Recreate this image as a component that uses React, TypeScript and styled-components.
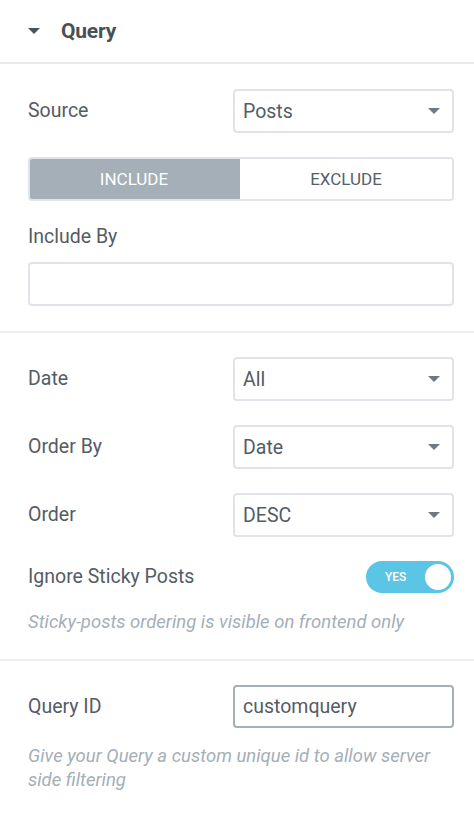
import { createGlobalStyle } from "styled-components";
import styled from "styled-components";

const GlobalStyle = createGlobalStyle`
  html, body {
    margin: 0;
    padding: 0;
    background: #ffffff;
  }
  body {
    font-family: Roboto, "Liberation Sans", Arial, sans-serif;
    color: #556068;
  }
`;

const Caret = ({ size = 12 }: { size?: number }) => (
  <svg width={size} height={size / 2} viewBox="0 0 12 6">
    <path d="M0 0 L12 0 L6 6 Z" fill="currentColor" />
  </svg>
);

const SelectField: React.FC<{ value: string }> = ({ value }) => (
  <Select>
    <span>{value}</span>
    <SelectCaret>
      <Caret size={12} />
    </SelectCaret>
  </Select>
);

export default function App() {
  return (
    <Panel>
      <GlobalStyle />
      <Header>
        <HeaderCaret>
          <Caret size={12} />
        </HeaderCaret>
        <Title>Query</Title>
      </Header>

      <Section $first>
        <Row>
          <Label>Source</Label>
          <SelectField value="Posts" />
        </Row>
        <Tabs>
          <Tab $active>INCLUDE</Tab>
          <Tab>EXCLUDE</Tab>
        </Tabs>
        <Field>
          <Label>Include By</Label>
          <TextBox />
        </Field>
      </Section>

      <Section>
        <Row>
          <Label>Date</Label>
          <SelectField value="All" />
        </Row>
        <Row>
          <Label>Order By</Label>
          <SelectField value="Date" />
        </Row>
        <Row>
          <Label>Order</Label>
          <SelectField value="DESC" />
        </Row>
        <Field $gap={17}>
          <SwitchRow>
            <Label>Ignore Sticky Posts</Label>
            <Switch>
              <SwitchText>YES</SwitchText>
              <Knob />
            </Switch>
          </SwitchRow>
          <Hint>Sticky-posts ordering is visible on frontend only</Hint>
        </Field>
      </Section>

      <Section $last>
        <Field $gap={16}>
          <Row>
            <Label>Query ID</Label>
            <TextBox $focused $half>
              customquery
            </TextBox>
          </Row>
          <Hint>Give your Query a custom unique id to allow server side filtering</Hint>
        </Field>
      </Section>
    </Panel>
  );
}

const Panel = styled.div`
  width: 474px;
  min-height: 818px;
  background: #fff;
`;

const Header = styled.div`
  height: 62px;
  display: flex;
  align-items: center;
  padding: 0 20px 0 28px;
  border-bottom: 2px solid #e8eaed;
`;

const HeaderCaret = styled.span`
  display: flex;
  color: #4b5259;
  margin-right: 21px;
  margin-top: -1px;
`;

const Title = styled.h3`
  margin: 0;
  font-size: 21px;
  font-weight: 700;
  color: #495157;
  letter-spacing: -0.2px;
`;

const Section = styled.div<{ $first?: boolean; $last?: boolean }>`
  display: flex;
  flex-direction: column;
  gap: 24px;
  padding: ${(p) => (p.$first ? 25 : 24)}px 20px 25px 28px;
  border-bottom: ${(p) => (p.$last ? "none" : "2px solid #eceef0")};
`;

const Row = styled.div`
  display: flex;
  align-items: center;
  justify-content: space-between;
`;

const Field = styled.div<{ $gap?: number }>`
  display: flex;
  flex-direction: column;
  gap: ${(p) => p.$gap ?? 13}px;
`;

const Label = styled.label`
  font-size: 19.5px;
  line-height: 24px;
  color: #545c64;
`;

const Select = styled.div`
  box-sizing: border-box;
  width: 221px;
  height: 44px;
  border: 2px solid #e0e4e8;
  border-radius: 4px;
  display: flex;
  align-items: center;
  justify-content: space-between;
  padding: 0 12px 0 8px;
  font-size: 19.5px;
  color: #545c64;
`;

const SelectCaret = styled.span`
  display: flex;
  color: #6d7882;
`;

const Tabs = styled.div`
  display: flex;
  height: 44px;
  border: 2px solid #e0e4e8;
  border-radius: 4px;
  overflow: hidden;
  box-sizing: border-box;
`;

const Tab = styled.div<{ $active?: boolean }>`
  flex: 1;
  display: flex;
  align-items: center;
  justify-content: center;
  font-size: 17px;
  background: ${(p) => (p.$active ? "#a4afb7" : "#fff")};
  color: ${(p) => (p.$active ? "#fff" : "#556068")};
  margin: ${(p) => (p.$active ? "-2px 0 -2px -2px" : "0")};
`;

const TextBox = styled.div<{ $focused?: boolean; $half?: boolean }>`
  box-sizing: border-box;
  width: ${(p) => (p.$half ? "221px" : "100%")};
  height: ${(p) => (p.$half ? "43px" : "44px")};
  border: 2px solid ${(p) => (p.$focused ? "#a4afb7" : "#e0e4e8")};
  border-radius: 4px;
  display: flex;
  align-items: center;
  padding: 0 8px;
  font-size: 19.5px;
  color: #545c64;
`;

const SwitchRow = styled.div`
  display: flex;
  align-items: center;
  justify-content: space-between;
  height: 32px;
`;

const Switch = styled.div`
  position: relative;
  width: 88px;
  height: 32px;
  border-radius: 16px;
  background: #5bc5e6;
  display: flex;
  align-items: center;
`;

const SwitchText = styled.span`
  font-size: 12px;
  font-weight: 500;
  color: #fff;
  margin-left: 19px;
`;

const Knob = styled.span`
  position: absolute;
  right: 1px;
  top: 1px;
  width: 30px;
  height: 30px;
  box-sizing: border-box;
  border-radius: 50%;
  background: #fff;
  border: 2px solid #5bc5e6;
`;

const Hint = styled.p`
  margin: 0;
  font-size: 18.5px;
  line-height: 24px;
  font-style: italic;
  color: #a4afb7;
  padding-right: 10px;
`;
